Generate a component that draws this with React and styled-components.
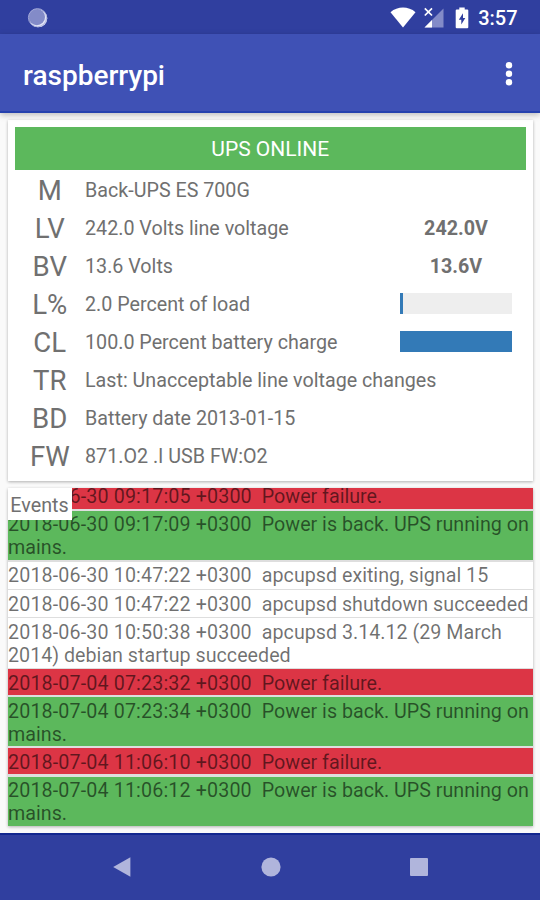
import React from 'react';
import styled, { createGlobalStyle } from 'styled-components';

const GlobalStyle = createGlobalStyle`
  * {
    box-sizing: border-box;
  }

  body {
    margin: 0;
    background: #fafafa;
    font-family: Roboto, 'Liberation Sans', sans-serif;
  }
`;

const Screen = styled.div`
  display: flex;
  flex-direction: column;
  width: 540px;
  height: 900px;
  overflow: hidden;
  background: #fafafa;
  color: #707070;
`;

const StatusBar = styled.header`
  flex: none;
  display: flex;
  align-items: center;
  justify-content: space-between;
  height: 34px;
  padding: 1px 22.5px 0 26.5px;
  background: #303f9f;
`;

const StatusIcons = styled.div`
  display: flex;
  align-items: center;
`;

const Clock = styled.span`
  margin-left: 9px;
  font-size: 20px;
  font-weight: 500;
  line-height: 34px;
  color: #fff;
`;

const AppBar = styled.div`
  flex: none;
  display: flex;
  align-items: center;
  justify-content: space-between;
  height: 79px;
  padding: 3px 27px 0 23px;
  background: #3f51b5;
  border-bottom: 2px solid #2541ae;
  box-shadow: 0 2px 6px rgba(0, 0, 0, 0.25);
  z-index: 1;
`;

const Title = styled.h1`
  margin: 3px 0 0;
  font-size: 28px;
  font-weight: 500;
  line-height: 34px;
  color: #fff;
`;

const MenuButton = styled.button`
  display: flex;
  padding: 0;
  border: 0;
  background: none;
`;

const Content = styled.main`
  flex: 1;
  display: flex;
  flex-direction: column;
  gap: 7px;
  padding: 7px 7px 0 7.5px;
`;

const Card = styled.section`
  position: relative;
  background: #fff;
  box-shadow: 0 1px 3px rgba(0, 0, 0, 0.3);
`;

const StatusCard = styled(Card)`
  height: 361px;
  padding: 7px 7px 0;
`;

const Banner = styled.div`
  height: 42.5px;
  margin-bottom: 2.5px;
  background: #5cb85c;
  color: #fff;
  font-size: 21px;
  line-height: 45px;
  text-align: center;
`;

const Row = styled.div`
  display: grid;
  grid-template-columns: 70.5px 1fr 112px;
  align-items: center;
  height: 38px;
  padding-right: 14px;
`;

const Code = styled.span`
  font-size: 27.6px;
  line-height: 38px;
  text-align: center;
`;

const Description = styled.span`
  font-size: 19.7px;
  line-height: 38px;
  white-space: nowrap;
`;

const Reading = styled.span`
  font-size: 19.7px;
  font-weight: 700;
  line-height: 38px;
  text-align: center;
`;

const Meter = styled.div`
  height: 21px;
  margin-bottom: 3px;
  background: #eee;
`;

const MeterFill = styled.div`
  min-width: 3px;
  height: 100%;
  background: #337ab7;
`;

const EventsCard = styled(Card)`
  height: 337.6px;
`;

const EventsLabel = styled.h2`
  position: absolute;
  top: 0;
  left: 0;
  width: 64px;
  height: 32px;
  margin: 0;
  background: #fff;
  font-size: 19.7px;
  font-weight: 400;
  line-height: 35px;
  text-align: center;
`;

const EventList = styled.ul`
  display: flex;
  flex-direction: column;
  justify-content: flex-end;
  gap: 2.1px;
  height: 100%;
  margin: 0;
  padding: 0;
  overflow: hidden;
  list-style: none;
  background: #dedede;
`;

const eventColors = {
  failure: '#dc3545',
  restored: '#5cb85c',
  info: '#fff',
};

const Event = styled.li`
  flex: none;
  padding: 2.6px 0 0.3px 0.5px;
  background: ${props => eventColors[props.$kind]};
  box-shadow: ${props => (props.$kind === 'info' ? '0 1px 0 #fff' : 'none')};
  color: rgba(0, 0, 0, 0.56);
  font-size: 19.7px;
  line-height: 23.1px;
  white-space: pre-wrap;
`;

const Stamp = styled.span`
  letter-spacing: 0.13px;
`;

const NavBar = styled.nav`
  flex: none;
  display: flex;
  align-items: center;
  justify-content: space-between;
  height: 67px;
  padding: 0 112.5px 2px 111.5px;
  background: #303f9f;
  border-top: 2px solid #12278f;
`;

const readings = [
  { code: 'M', text: 'Back-UPS ES 700G' },
  { code: 'LV', text: '242.0 Volts line voltage', value: '242.0V' },
  { code: 'BV', text: '13.6 Volts', value: '13.6V' },
  { code: 'L%', text: '2.0 Percent of load', percent: 2 },
  { code: 'CL', text: '100.0 Percent battery charge', percent: 100 },
  { code: 'TR', text: 'Last: Unacceptable line voltage changes' },
  { code: 'BD', text: 'Battery date 2013-01-15' },
  { code: 'FW', text: '871.O2 .I USB FW:O2' },
];

const events = [
  { kind: 'failure', time: '2018-06-30 09:17:05 +0300', text: 'Power failure.' },
  { kind: 'restored', time: '2018-06-30 09:17:09 +0300', text: 'Power is back. UPS running on mains.' },
  { kind: 'info', time: '2018-06-30 10:47:22 +0300', text: 'apcupsd exiting, signal 15' },
  { kind: 'info', time: '2018-06-30 10:47:22 +0300', text: 'apcupsd shutdown succeeded' },
  { kind: 'info', time: '2018-06-30 10:50:38 +0300', text: 'apcupsd 3.14.12 (29 March 2014) debian startup succeeded' },
  { kind: 'failure', time: '2018-07-04 07:23:32 +0300', text: 'Power failure.' },
  { kind: 'restored', time: '2018-07-04 07:23:34 +0300', text: 'Power is back. UPS running on mains.' },
  { kind: 'failure', time: '2018-07-04 11:06:10 +0300', text: 'Power failure.' },
  { kind: 'restored', time: '2018-07-04 11:06:12 +0300', text: 'Power is back. UPS running on mains.' },
];

const SyncIcon = () => (
  <svg width="22" height="22" viewBox="0 0 22 22">
    <circle cx="11.3" cy="11.3" r="9" fill="#e3e6f7" />
    <circle cx="9.8" cy="10" r="8.2" fill="#838bc8" />
    <circle cx="10.5" cy="10.7" r="9.1" fill="none" stroke="#a9afdb" strokeWidth="0.9" />
  </svg>
);

const WifiIcon = () => (
  <svg width="26" height="21" viewBox="0 0 26 21">
    <path d="M0.5 5.2C7.6-1 18.4-1 25.5 5.2L13 20.5Z" fill="#fff" />
  </svg>
);

const SignalIcon = () => (
  <svg width="20" height="21" viewBox="0 0 20 21">
    <path d="M19.5 1.5V20.5H0.5Z" fill="#838bc8" />
    <path d="M8 13V20.5H0.5Z" fill="#fff" />
    <path d="M0.8 1.3L8 8.5M8 1.3L0.8 8.5" stroke="#fff" strokeWidth="1.7" />
  </svg>
);

const BatteryIcon = () => (
  <svg width="14" height="22" viewBox="0 0 14 22">
    <path d="M4.3 0.5H9.7V2.5H12.2Q13.3 2.5 13.3 3.6V20.2Q13.3 21.3 12.2 21.3H1.8Q0.7 21.3 0.7 20.2V3.6Q0.7 2.5 1.8 2.5H4.3Z" fill="#fff" />
    <path d="M8 6.3L3.8 12.8H6.3V17.6L10.3 11H8Z" fill="#303f9f" />
  </svg>
);

const SignalSlot = styled.span`
  display: flex;
  margin: 0 11px 0 8px;
`;

const MoreIcon = () => (
  <svg width="8" height="26" viewBox="0 0 8 26" fill="#fff">
    <circle cx="4" cy="4.2" r="3.2" />
    <circle cx="4" cy="12.8" r="3.2" />
    <circle cx="4" cy="21.3" r="3.2" />
  </svg>
);

const BackIcon = () => (
  <svg width="20" height="22" viewBox="0 0 20 22">
    <path d="M18.4 1.3V20.7L1.2 11Z" fill="#b0b5dc" />
  </svg>
);

const HomeIcon = () => (
  <svg width="20" height="20" viewBox="0 0 20 20">
    <circle cx="10" cy="10" r="9.6" fill="#b0b5dc" />
  </svg>
);

const RecentsIcon = () => (
  <svg width="18" height="18" viewBox="0 0 18 18">
    <rect width="18" height="18" rx="1" fill="#b0b5dc" />
  </svg>
);

export default function App() {
  return (
    <Screen>
      <GlobalStyle />
      <StatusBar>
        <SyncIcon />
        <StatusIcons>
          <WifiIcon />
          <SignalSlot>
            <SignalIcon />
          </SignalSlot>
          <BatteryIcon />
          <Clock>3:57</Clock>
        </StatusIcons>
      </StatusBar>

      <AppBar>
        <Title>raspberrypi</Title>
        <MenuButton aria-label="More options">
          <MoreIcon />
        </MenuButton>
      </AppBar>

      <Content>
        <StatusCard>
          <Banner>UPS ONLINE</Banner>
          {readings.map(({ code, text, value, percent }) => (
            <Row key={code}>
              <Code>{code}</Code>
              <Description>{text}</Description>
              {value && <Reading>{value}</Reading>}
              {percent !== undefined && (
                <Meter>
                  <MeterFill style={{ width: `${percent}%` }} />
                </Meter>
              )}
            </Row>
          ))}
        </StatusCard>

        <EventsCard>
          <EventList>
            {events.map(({ kind, time, text }, i) => (
              <Event key={i} $kind={kind}>
                <Stamp>{time}{'  '}</Stamp>
                {text}
              </Event>
            ))}
          </EventList>
          <EventsLabel>Events</EventsLabel>
        </EventsCard>
      </Content>

      <NavBar>
        <BackIcon />
        <HomeIcon />
        <RecentsIcon />
      </NavBar>
    </Screen>
  );
}
